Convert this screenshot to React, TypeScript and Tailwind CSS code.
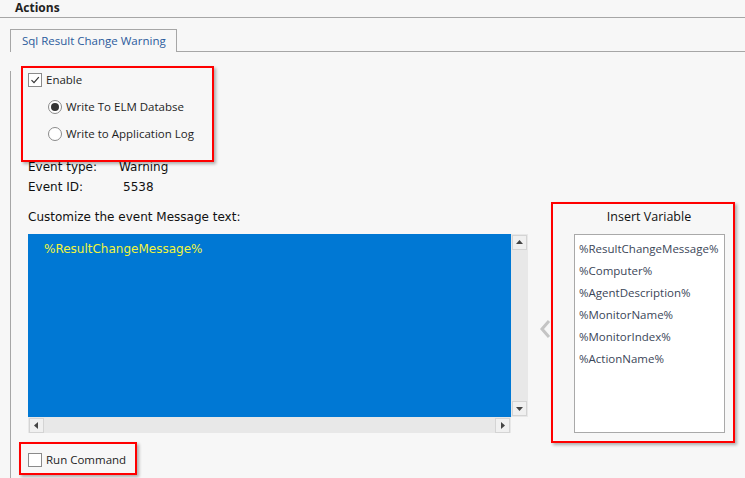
import React from 'react';

const ui = { fontFamily: '"Open Sans", "Noto Sans", sans-serif' };
const tahoma = { fontFamily: '"DejaVu Sans", "Liberation Sans", sans-serif' };

const variables = [
  '%ResultChangeMessage%',
  '%Computer%',
  '%AgentDescription%',
  '%MonitorName%',
  '%MonitorIndex%',
  '%ActionName%',
];

const CheckBox: React.FC<{ checked?: boolean }> = ({ checked }) => (
  <div className="w-[14px] h-[14px] border border-[#8a8a8a] bg-white flex items-center justify-center">
    {checked && (
      <svg width="10" height="10" viewBox="0 0 10 10">
        <path d="M1.5 5.2 L4 7.7 L8.8 2.2" fill="none" stroke="#333" strokeWidth="1.2" />
      </svg>
    )}
  </div>
);

const Radio: React.FC<{ checked?: boolean }> = ({ checked }) => (
  <div className="w-[14px] h-[14px] rounded-full border border-[#8a8a8a] bg-white flex items-center justify-center">
    {checked && <div className="w-[8px] h-[8px] rounded-full bg-[#333]" />}
  </div>
);

const ScrollBtn: React.FC<{ dir: 'up' | 'down' | 'left' | 'right' }> = ({ dir }) => {
  const pts = {
    up: '1,6 4.5,2 8,6',
    down: '1,3 4.5,7 8,3',
    left: '6,1 2,4.5 6,8',
    right: '3,1 7,4.5 3,8',
  }[dir];
  return (
    <div className="w-[15px] h-[15px] border border-[#d4d4d4] bg-[#f0f0f0] flex items-center justify-center">
      <svg width="9" height="9" viewBox="0 0 9 9">
        <polygon points={pts} fill="#444" />
      </svg>
    </div>
  );
};

export default function App() {
  return (
    <div className="relative w-[745px] h-[478px] overflow-hidden bg-[#f7f7f7] text-[11.5px] text-[#1e1e1e]" style={ui}>
      {/* Header */}
      <div className="h-[18px] border-b border-[#a6a6a6] pl-[15px] font-bold text-[12px] leading-[16px] text-[#222]">Actions</div>

      {/* Tabs */}
      <div className="flex pt-[11px] pl-[10px]">
        <div className="h-[23px] w-[167px] border border-b-0 border-[#a6a6a6] pl-[11px] leading-[21px] text-[#2b5b9c]">
          Sql Result Change Warning
        </div>
        <div className="flex-1 border-b border-[#a6a6a6]" />
      </div>

      {/* Tab body */}
      <div className="ml-[10px] border-l border-[#a6a6a6] h-[426px] pl-[17px]">
        <div className="h-[18px] mt-[19px] flex items-center gap-[4px]">
          <CheckBox checked />
          <span>Enable</span>
        </div>
        <div className="h-[18px] mt-[9px] pl-[20px] flex items-center gap-[4px]">
          <Radio checked />
          <span>Write To ELM Databse</span>
        </div>
        <div className="h-[18px] mt-[9px] pl-[20px] flex items-center gap-[4px]">
          <Radio />
          <span>Write to Application Log</span>
        </div>

        <div className="h-[16px] mt-[16px] flex items-center text-[12px] text-[#111]" style={tahoma}>
          <span className="w-[91px]">Event type:</span>
          <span>Warning</span>
        </div>
        <div className="h-[16px] mt-[4px] flex items-center text-[12px] text-[#111]" style={tahoma}>
          <span className="w-[95px]">Event ID:</span>
          <span>5538</span>
        </div>

        <div className="flex mt-[14px]">
          {/* Message editor */}
          <div className="w-[500px]">
            <div className="h-[16px] flex items-center text-[12px] text-[#111]" style={tahoma}>
              Customize the event Message text:
            </div>
            <div className="mt-[9px] flex">
              <div className="w-[483px] h-[183px] bg-[#0078d4] pl-[16px] pt-[6px] text-[12px] text-[#f2f53c]" style={tahoma}>
                %ResultChangeMessage%
              </div>
              <div className="w-[17px] h-[183px] bg-[#e8e8e8] flex flex-col justify-between items-center py-[1px]">
                <ScrollBtn dir="up" />
                <ScrollBtn dir="down" />
              </div>
            </div>
            <div className="flex">
              <div className="w-[483px] h-[16px] bg-[#e8e8e8] flex justify-between items-center px-[1px]">
                <ScrollBtn dir="left" />
                <ScrollBtn dir="right" />
              </div>
            </div>
            <div className="h-[18px] mt-[18px] flex items-center gap-[4px]">
              <CheckBox />
              <span>Run Command</span>
            </div>
          </div>

          {/* Collapse arrow */}
          <div className="w-[24px] flex items-center justify-end pr-[1px] pb-[20px]">
            <svg width="12" height="20" viewBox="0 0 12 20">
              <path d="M10 2 L3 10 L10 18" fill="none" stroke="#c4c4c4" strokeWidth="3" />
            </svg>
          </div>

          {/* Insert variable */}
          <div className="w-[184px] pl-[22px]">
            <div className="h-[16px] w-[150px] text-center text-[12.5px] leading-[16px] text-[#111]">
              Insert Variable
            </div>
            <div className="mt-[9px] w-[151px] h-[199px] bg-white border border-[#a9a9a9] pl-[4px] pt-[3px] text-[#3b4658]">
              {variables.map((v) => (
                <div key={v} className="h-[22px] leading-[22px]">{v}</div>
              ))}
            </div>
          </div>
        </div>
      </div>

      {/* Red highlight annotations */}
      <div className="absolute left-[21px] top-[66px] w-[193px] h-[96px] border-2 border-[#f00] shadow-[2px_2px_3px_rgba(0,0,0,0.3)]" />
      <div className="absolute left-[551px] top-[202px] w-[184px] h-[241px] border-2 border-[#f00] shadow-[2px_2px_3px_rgba(0,0,0,0.3)]" />
      <div className="absolute left-[19px] top-[442px] w-[118px] h-[33px] border-2 border-[#f00] shadow-[2px_2px_3px_rgba(0,0,0,0.3)]" />
    </div>
  );
}
